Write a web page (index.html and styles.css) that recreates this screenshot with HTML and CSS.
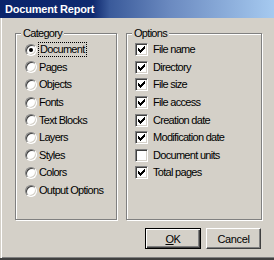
FILE: index.html
```html
<!DOCTYPE html>
<html lang="en">
<head>
  <meta charset="UTF-8" />
  <title>Document Report</title>
  <link rel="stylesheet" href="styles.css">
</head>
<body>
  <div class="dialog">
    <div class="titlebar">Document Report</div>
    <div class="content">
      <div class="groups">
        <div class="group group-category">
          <span class="legend">Category</span>
          <ul class="list">
            <li><span class="radio checked"></span><span class="label focus">Document</span></li>
            <li><span class="radio"></span><span class="label">Pages</span></li>
            <li><span class="radio"></span><span class="label">Objects</span></li>
            <li><span class="radio"></span><span class="label">Fonts</span></li>
            <li><span class="radio"></span><span class="label">Text Blocks</span></li>
            <li><span class="radio"></span><span class="label">Layers</span></li>
            <li><span class="radio"></span><span class="label">Styles</span></li>
            <li><span class="radio"></span><span class="label">Colors</span></li>
            <li><span class="radio"></span><span class="label">Output Options</span></li>
          </ul>
        </div>
        <div class="group group-options">
          <span class="legend">Options</span>
          <ul class="list">
            <li><span class="check on"><svg viewBox="0 0 11 11" width="11" height="11"><path d="M2 4h1v3h-1z M3 5h1v3h-1z M4 6h1v3h-1z M5 5h1v3h-1z M6 4h1v3h-1z M7 3h1v3h-1z M8 2h1v3h-1z"/></svg></span><span class="label">File name</span></li>
            <li><span class="check on"><svg viewBox="0 0 11 11" width="11" height="11"><path d="M2 4h1v3h-1z M3 5h1v3h-1z M4 6h1v3h-1z M5 5h1v3h-1z M6 4h1v3h-1z M7 3h1v3h-1z M8 2h1v3h-1z"/></svg></span><span class="label">Directory</span></li>
            <li><span class="check on"><svg viewBox="0 0 11 11" width="11" height="11"><path d="M2 4h1v3h-1z M3 5h1v3h-1z M4 6h1v3h-1z M5 5h1v3h-1z M6 4h1v3h-1z M7 3h1v3h-1z M8 2h1v3h-1z"/></svg></span><span class="label">File size</span></li>
            <li><span class="check on"><svg viewBox="0 0 11 11" width="11" height="11"><path d="M2 4h1v3h-1z M3 5h1v3h-1z M4 6h1v3h-1z M5 5h1v3h-1z M6 4h1v3h-1z M7 3h1v3h-1z M8 2h1v3h-1z"/></svg></span><span class="label">File access</span></li>
            <li><span class="check on"><svg viewBox="0 0 11 11" width="11" height="11"><path d="M2 4h1v3h-1z M3 5h1v3h-1z M4 6h1v3h-1z M5 5h1v3h-1z M6 4h1v3h-1z M7 3h1v3h-1z M8 2h1v3h-1z"/></svg></span><span class="label">Creation date</span></li>
            <li><span class="check on"><svg viewBox="0 0 11 11" width="11" height="11"><path d="M2 4h1v3h-1z M3 5h1v3h-1z M4 6h1v3h-1z M5 5h1v3h-1z M6 4h1v3h-1z M7 3h1v3h-1z M8 2h1v3h-1z"/></svg></span><span class="label">Modification date</span></li>
            <li><span class="check"></span><span class="label">Document units</span></li>
            <li><span class="check on"><svg viewBox="0 0 11 11" width="11" height="11"><path d="M2 4h1v3h-1z M3 5h1v3h-1z M4 6h1v3h-1z M5 5h1v3h-1z M6 4h1v3h-1z M7 3h1v3h-1z M8 2h1v3h-1z"/></svg></span><span class="label">Total pages</span></li>
          </ul>
        </div>
      </div>
      <div class="buttons">
        <button class="btn default"><u>O</u>K</button>
        <button class="btn">Cancel</button>
      </div>
    </div>
  </div>
</body>
</html>
```

FILE: styles.css
```css
html, body {
  margin: 0;
  padding: 0;
}
body {
  width: 274px;
  height: 260px;
  overflow: hidden;
  background-color: #d4d0c8;
  font-family: "Liberation Sans", Arial, sans-serif;
  font-size: 11px;
  color: #000;
}
.dialog {
  height: 258px;
  border-bottom: 2px solid #404040;
  box-shadow: inset 0 -1px 0 #808080;
}
.titlebar {
  height: 18px;
  line-height: 18px;
  padding-left: 5px;
  color: #fff;
  font-weight: bold;
  letter-spacing: -0.2px;
  background: linear-gradient(to right, #0a246a 0%, #0f2a70 34%, #3a5a9a 40%, #6b8ac0 62%, #a6caf0 100%);
}
.content {
  height: 240px;
  border-left: 1px solid #d4d0c8;
  box-shadow: inset 1px 0 0 #fff;
  padding: 15px 0 0 14px;
  box-sizing: border-box;
}
.groups {
  display: flex;
  gap: 9px;
}
.group {
  position: relative;
  height: 187px;
  box-sizing: border-box;
  border: 1px solid #808080;
  box-shadow: inset 1px 1px 0 #fff, 1px 1px 0 #fff;
}
.group-category {
  width: 102px;
}
.group-options {
  width: 136px;
}
.legend {
  position: absolute;
  top: -7px;
  left: 5px;
  padding: 0 2px;
  line-height: 13px;
  background-color: #d4d0c8;
  letter-spacing: -0.7px;
}
.list {
  list-style: none;
  margin: 0;
  padding: 7px 0 0 0;
}
.list li {
  height: 17.6px;
  display: flex;
  align-items: center;
}
.label {
  letter-spacing: -0.7px;
  line-height: 13px;
}
.focus {
  outline: 1px dotted #000;
  outline-offset: 0;
  padding: 0 1px;
}
.radio {
  position: relative;
  width: 12px;
  height: 12px;
  box-sizing: border-box;
  margin: 0 2px 0 9px;
  border-radius: 50%;
  border: 1px solid;
  border-color: #808080 #fff #fff #808080;
  background-color: #fff;
  box-shadow: inset 1px 1px 0 #404040, inset -1px -1px 0 #d4d0c8;
}
.radio.checked::after {
  content: "";
  position: absolute;
  left: 3px;
  top: 3px;
  width: 4px;
  height: 4px;
  border-radius: 50%;
  background-color: #000;
}
.check {
  width: 13px;
  height: 13px;
  box-sizing: border-box;
  margin: 0 5px 0 8px;
  border: 1px solid;
  border-color: #808080 #fff #fff #808080;
  background-color: #fff;
  box-shadow: inset 1px 1px 0 #404040, inset -1px -1px 0 #d4d0c8;
}
.check svg {
  display: block;
  shape-rendering: crispEdges;
}
.buttons {
  display: flex;
  justify-content: flex-end;
  gap: 5px;
  margin-top: 8px;
  padding-right: 13px;
}
.btn {
  width: 55px;
  height: 21px;
  padding: 0;
  box-sizing: border-box;
  font-family: "Liberation Sans", Arial, sans-serif;
  font-size: 11px;
  letter-spacing: -0.4px;
  color: #000;
  background-color: #d4d0c8;
  border: 1px solid;
  border-color: #fff #404040 #404040 #fff;
  box-shadow: inset -1px -1px 0 #808080;
}
.btn.default {
  width: 56px;
  border: 1px solid #000;
  box-shadow: inset 1px 1px 0 #fff, inset -1px -1px 0 #404040, inset -2px -2px 0 #808080;
}
.btn u {
  text-decoration: underline;
}
```
